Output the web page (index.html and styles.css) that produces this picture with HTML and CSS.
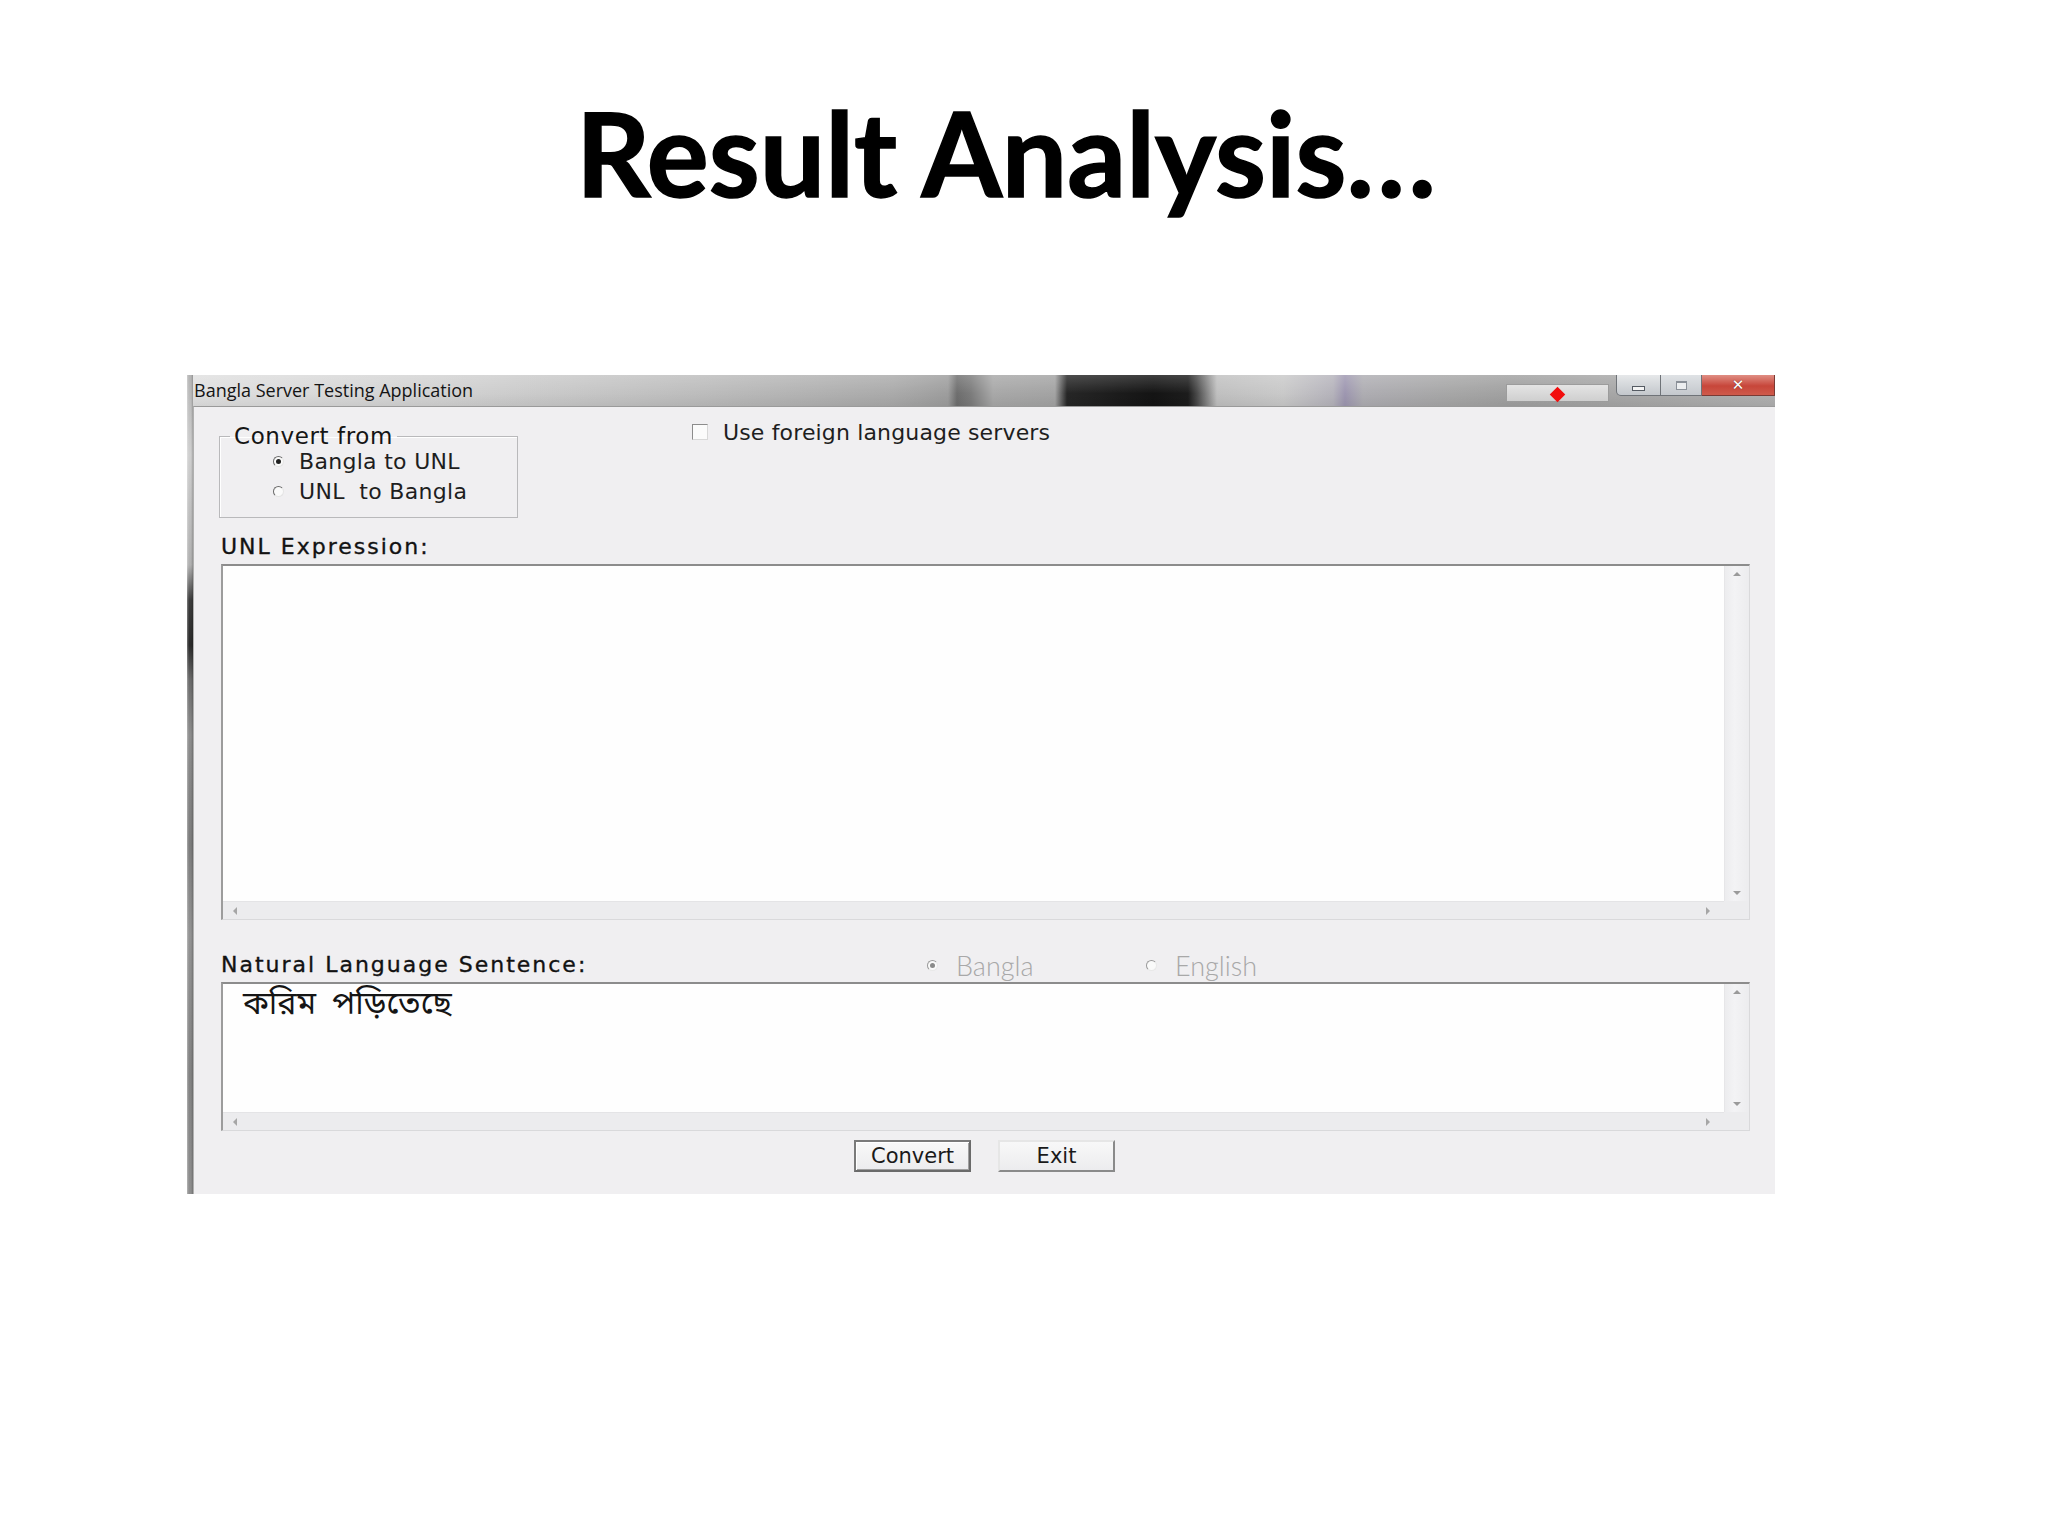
FILE: index.html
```html
<!DOCTYPE html>
<html lang="en">
<head>
<meta charset="utf-8">
<title>Result Analysis</title>
<link rel="stylesheet" href="styles.css">
</head>
<body>
<div class="slide">
  <h1 class="title">Result Analysis…</h1>
  <div class="window">
    <div class="frame-left"></div>
    <div class="main">
      <div class="titlebar">
        <span class="app-title">Bangla Server Testing Application</span>
        <div class="tb-extra"><span class="diamond"></span></div>
        <div class="controls">
          <span class="ctl min"><span class="min-glyph"></span></span>
          <span class="ctl max"><span class="max-glyph"></span></span>
          <span class="ctl close">✕</span>
        </div>
      </div>
      <div class="client">
        <div class="top-row">
          <fieldset class="group">
            <legend>Convert from</legend>
            <div class="opt"><span class="radio checked"></span>Bangla to UNL</div>
            <div class="opt"><span class="radio"></span>UNL&nbsp; to Bangla</div>
          </fieldset>
          <div class="check-row"><span class="checkbox"></span>Use foreign language servers</div>
        </div>
        <div class="label">UNL Expression:</div>
        <div class="textbox tall">
          <div class="text-area"></div>
          <div class="vscroll"><span class="arr up"></span><span class="arr down"></span></div>
          <div class="hscroll"><span class="arr left"></span><span class="arr right"></span></div>
          <div class="corner"></div>
        </div>
        <div class="label-row">
          <div class="label">Natural Language Sentence:</div>
          <div class="dis-opt bangla"><span class="radio dis checked"></span>Bangla</div>
          <div class="dis-opt english"><span class="radio dis"></span>English</div>
        </div>
        <div class="textbox short">
          <div class="text-area"><span class="bn" lang="bn">করিম পড়িতেছে</span></div>
          <div class="vscroll"><span class="arr up"></span><span class="arr down"></span></div>
          <div class="hscroll"><span class="arr left"></span><span class="arr right"></span></div>
          <div class="corner"></div>
        </div>
        <div class="buttons">
          <button class="btn default">Convert</button>
          <button class="btn">Exit</button>
        </div>
      </div>
    </div>
  </div>
</div>
</body>
</html>
```

FILE: styles.css
```css
* { box-sizing: border-box; }
html, body { margin: 0; padding: 0; background: #ffffff; }
body {
  width: 2048px;
  height: 1536px;
  overflow: hidden;
  font-family: "DejaVu Sans", sans-serif;
  color: #1c1c1c;
}
.slide { width: 2048px; height: 1536px; padding-top: 95px; }
.title {
  margin: 0 36px 0 0;
  text-align: center;
  font-family: Lato, "Open Sans", sans-serif;
  font-weight: 700;
  font-size: 116px;
  line-height: 116px;
  color: #000;
  -webkit-text-stroke: 1.5px #000;
}
.window {
  margin: 164px 0 0 187px;
  width: 1588px;
  height: 819px;
  display: flex;
}
.frame-left {
  width: 6px;
  background:
    linear-gradient(to right, rgba(255,255,255,0.35) 0, rgba(255,255,255,0) 2px, rgba(0,0,0,0) 4px, rgba(0,0,0,0.2) 6px),
    linear-gradient(to bottom, #b5b5b5 0, #cfcfcf 80px, #b0b0b0 190px, #3c3c3c 225px, #2a2a2a 270px, #6a6a6a 305px, #8d8d8d 360px, #7c7c7c 470px, #939393 560px, #828282 700px, #8e8e8e 819px);
}
.main { flex: 1; display: flex; flex-direction: column; }
.titlebar {
  height: 31px;
  display: flex;
  align-items: flex-start;
  background:
    linear-gradient(to bottom, rgba(255,255,255,0.18), rgba(255,255,255,0) 60%, rgba(0,0,0,0.06)),
    linear-gradient(to right, #e0e0e0 0px, #d2d2d2 250px, #bdbdbd 500px, #aaaaaa 700px, #9d9d9d 755px, #6e6e6e 764px, #7c7c7c 778px, #a8a8a8 800px, #a3a3a3 862px, #262626 874px, #141414 960px, #1c1c1c 995px, #4a4a4a 1004px, #c0c0c0 1024px, #c9c9c9 1090px, #b5b3bb 1140px, #9d96b0 1152px, #aeadb2 1170px, #a6a6a6 1260px, #a0a0a0 1320px, #b0b0b0 1582px);
}
.app-title {
  font-family: "Open Sans", sans-serif;
  font-size: 18px;
  line-height: 31px;
  color: #141414;
  padding-left: 1px;
  flex: 1;
}
.tb-extra {
  width: 103px;
  height: 18px;
  margin-top: 9px;
  margin-right: 7px;
  background: linear-gradient(to bottom, #e4e4e4, #cfcfcf);
  border: 1px solid #9c9c9c;
  display: flex;
  align-items: center;
  justify-content: center;
}
.diamond {
  width: 11px;
  height: 11px;
  background: #f20d0d;
  transform: rotate(45deg);
  margin-top: 2px;
}
.controls { display: flex; height: 21px; }
.ctl {
  height: 21px;
  display: flex;
  align-items: center;
  justify-content: center;
  border: 1px solid #6f7378;
  border-top: none;
}
.ctl.min {
  width: 45px;
  border-radius: 0 0 0 5px;
  background: linear-gradient(to bottom, #e6e8ea, #c3c7cc);
}
.ctl.max {
  width: 41px;
  border-left: none;
  background: linear-gradient(to bottom, #dfe2e5, #c4c8cd);
}
.ctl.close {
  width: 73px;
  border-left: none;
  background: linear-gradient(to bottom, #e08e84, #c7463a 55%, #cf5a4b);
  color: #fff;
  font-family: "DejaVu Sans", sans-serif;
  font-weight: bold;
  font-size: 15px;
  border-color: #7a3a34;
  text-shadow: 0 0 1px #5a1a14;
}
.min-glyph { width: 13px; height: 5px; background: #f4f4f4; border: 1px solid #555b63; margin-top: 6px; }
.max-glyph { width: 11px; height: 9px; border: 1px solid #8a9098; border-top-width: 2px; background: #eceef0; }

.client {
  flex: 1;
  background: #f0eff1;
  border-top: 1px solid #9a9a9a;
  border-left: 1px solid #b0b0b0;
  display: flex;
  flex-direction: column;
}
.top-row { display: flex; align-items: flex-start; height: 112px; }
.group {
  margin: 19px 0 0 25px;
  width: 299px;
  height: 92px;
  padding: 0 0 10px 10px;
  border: 1px solid #b9b9bb;
  box-shadow: inset 1px 1px 0 #ffffff;
}
.group legend {
  padding: 0 4px;
  font-size: 23px;
  line-height: 20px;
  letter-spacing: 0.6px;
  color: #151515;
}
.opt {
  display: flex;
  align-items: center;
  height: 30px;
  padding-left: 43px;
  font-size: 22px;
  letter-spacing: 0.3px;
  color: #1e1e1e;
  white-space: pre;
}
.radio {
  display: inline-block;
  position: relative;
  width: 11px;
  height: 11px;
  border-radius: 50%;
  border: 1px solid;
  border-color: #6a6a6a #e4e4e4 #e4e4e4 #6a6a6a;
  background: #fafafa;
  margin-right: 15px;
  flex: none;
}
.radio.checked::after {
  content: "";
  position: absolute;
  left: 2px;
  top: 2px;
  width: 5px;
  height: 5px;
  border-radius: 50%;
  background: #202020;
}
.check-row {
  display: flex;
  align-items: center;
  margin: 12px 0 0 174px;
  height: 26px;
  font-size: 22px;
  letter-spacing: 0.15px;
  color: #1e1e1e;
}
.checkbox {
  width: 16px;
  height: 16px;
  border: 1px solid #8c8c8c;
  border-right-color: #d8d8d8;
  border-bottom-color: #d8d8d8;
  background: #fbfbfb;
  margin-right: 15px;
}
.label {
  margin-left: 27px;
  font-size: 22px;
  line-height: 26px;
  letter-spacing: 2px;
  color: #121212;
  -webkit-text-stroke: 0.35px #121212;
}
.top-row + .label { margin-top: 15px; }
.textbox {
  margin: 4px 0 0 27px;
  width: 1529px;
  display: grid;
  grid-template-columns: 1fr 25px;
  grid-template-rows: 1fr 18px;
  border-top: 2px solid #8c8c8c;
  border-left: 2px solid #9c9c9c;
  border-right: 1px solid #d9d9db;
  border-bottom: 1px solid #d9d9db;
  background: #ececee;
}
.textbox.tall { height: 356px; }
.textbox.short { height: 149px; }
.text-area { background: #fefefe; padding: 6px 0 0 20px; }
.vscroll {
  position: relative;
  background: linear-gradient(to right, #ececee 0, #f3f3f5 40%, #ececee 100%);
  border-left: 1px solid #e6e6e8;
}
.hscroll { position: relative; background: #ececee; border-top: 1px solid #e4e4e6; }
.corner { background: #ececee; }
.arr { position: absolute; width: 0; height: 0; border: 4px solid transparent; }
.arr.up { left: 8px; top: 6px; border-bottom: 4px solid #9a9a9a; border-top-width: 0; }
.arr.down { left: 8px; bottom: 6px; border-top: 4px solid #9a9a9a; border-bottom-width: 0; }
.arr.left { left: 10px; top: 5px; border-right: 4px solid #a6a6a6; border-left-width: 0; }
.arr.right { right: 14px; top: 5px; border-left: 4px solid #a6a6a6; border-right-width: 0; }
.label-row { display: flex; align-items: center; height: 26px; margin-top: 32px; }
.label-row .label { width: 712px; margin-left: 27px; }
.dis-opt {
  display: flex;
  align-items: center;
  font-family: Lato, "Open Sans", sans-serif;
  font-weight: 300;
  font-size: 27px;
  color: #a8a8a8;
}
.dis-opt.bangla { width: 219px; margin-left: -6px; }
.radio.dis {
  border-color: #9a9a9a #e8e8e8 #e8e8e8 #9a9a9a;
  margin-right: 18px;
}
.radio.dis.checked::after { background: #8a8a8a; }
.bn {
  font-family: "Noto Sans Bengali", "Noto Serif Bengali", "Lohit Bengali", "FreeSans", sans-serif;
  font-size: 32px;
  line-height: 44px;
  word-spacing: 8px;
  color: #151515;
}
.short .text-area { padding: 0 0 0 20px; }
.buttons {
  display: flex;
  justify-content: center;
  gap: 27px;
  margin-top: 9px;
}
.btn {
  width: 117px;
  height: 32px;
  padding: 0;
  font-family: "DejaVu Sans", sans-serif;
  font-size: 21px;
  color: #1a1a1a;
  background: linear-gradient(to bottom, #f8f8f8, #ececee);
  border: 2px solid;
  border-color: #e6e6e6 #8a8a8a #8a8a8a #e6e6e6;
}
.btn.default {
  border-color: #7a7a7a #6a6a6a #6a6a6a #7a7a7a;
  box-shadow: inset 1px 1px 0 #ffffff, inset -1px -1px 0 #a0a0a0;
}
```
